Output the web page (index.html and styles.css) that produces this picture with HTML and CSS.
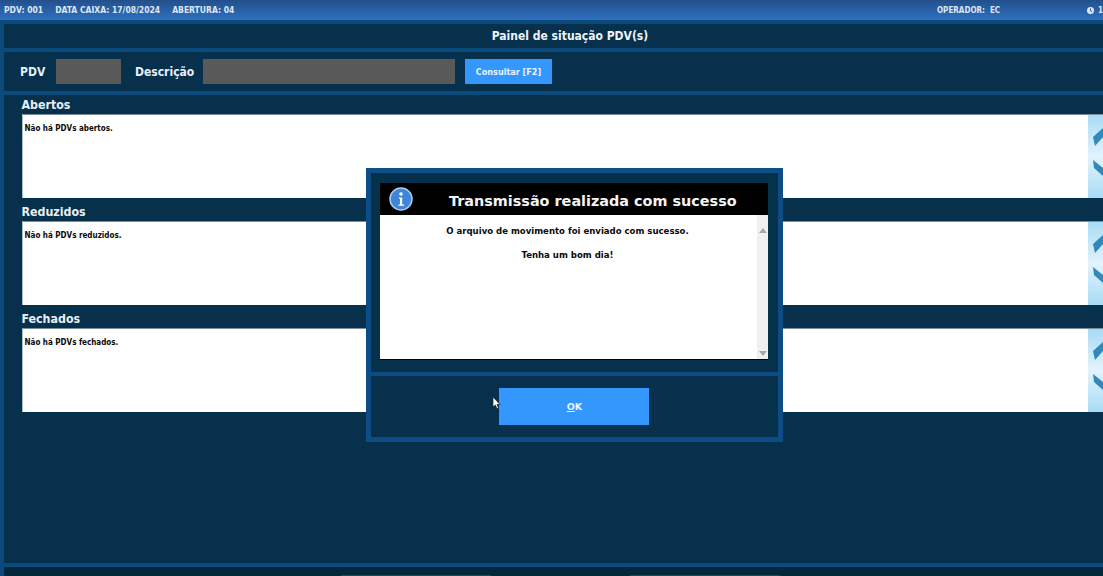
FILE: index.html
```html
<!DOCTYPE html>
<html lang="pt">
<head>
<meta charset="utf-8">
<title>Painel de situação PDV(s)</title>
<link rel="stylesheet" href="styles.css">
</head>
<body>
<div class="topbar">
  <div class="top-left"><span>PDV: 001</span><span>DATA CAIXA: 17/08/2024</span><span>ABERTURA: 04</span></div>
  <div class="top-right">
    <span class="operator">OPERADOR: &nbsp;EC</span>
    <svg class="clock" width="7" height="7" viewBox="0 0 7 7"><circle cx="3.5" cy="3.5" r="3.5" fill="#dfe8f2"/><path d="M3.5 1.5v2.2l1.7 1" stroke="#24528f" fill="none"/></svg>
    <span class="time">1</span>
  </div>
</div>
<main class="frame">
  <header class="title">Painel de situação PDV(s)</header>
  <form class="filters">
    <label class="flabel flabel-pdv">PDV</label>
    <div class="field field-pdv"></div>
    <label class="flabel flabel-desc">Descrição</label>
    <div class="field field-desc"></div>
    <button type="button" class="consult">Consultar [F2]</button>
  </form>
  <section class="content">
    <div class="group">
      <h2>Abertos</h2>
      <div class="listbox"><p>Não há PDVs abertos.</p><div class="chev"><svg width="15" height="84" viewBox="0 0 15 84"><path d="M5 22 15 13V22L7 31zM5 45 15 53V61L6 53z" fill="#3089ba"/></svg></div></div>
    </div>
    <div class="group">
      <h2>Reduzidos</h2>
      <div class="listbox"><p>Não há PDVs reduzidos.</p><div class="chev"><svg width="15" height="84" viewBox="0 0 15 84"><path d="M5 22 15 13V22L7 31zM5 45 15 53V61L6 53z" fill="#3089ba"/></svg></div></div>
    </div>
    <div class="group">
      <h2>Fechados</h2>
      <div class="listbox"><p>Não há PDVs fechados.</p><div class="chev"><svg width="15" height="84" viewBox="0 0 15 84"><path d="M5 22 15 13V22L7 31zM5 45 15 53V61L6 53z" fill="#3089ba"/></svg></div></div>
    </div>
  </section>
  <footer class="bottom"><span class="tab"></span><span class="tab"></span></footer>
</main>
<div class="modal">
  <div class="modal-top">
    <div class="modal-head">
      <svg class="info" width="24" height="24" viewBox="0 0 24 24"><circle cx="12" cy="12" r="11" fill="#3f86d6" stroke="#a9cdf2" stroke-width="1.5"/><circle cx="12" cy="7" r="1.8" fill="#fff"/><path d="M10 10.5h3.2v7H15v1.3H9.5v-1.3h1.5v-5.7h-1z" fill="#fff"/></svg>
      <h1>Transmissão realizada com sucesso</h1>
    </div>
    <div class="modal-body">
      <div class="msg"><p>O arquivo de movimento foi enviado com sucesso.</p><p>Tenha um bom dia!</p></div>
      <div class="scroll"><i class="up"></i><i class="down"></i></div>
    </div>
  </div>
  <div class="modal-foot"><button type="button" class="ok"><u>O</u>K</button></div>
</div>
<svg class="cursor" width="9" height="14" viewBox="0 0 9 14"><path d="M1 1v10l2.3-2 1.6 3.6 1.6-.7L5 8.4h3z" fill="#fff" stroke="#222" stroke-width=".7"/></svg>
</body>
</html>
```
FILE: styles.css
```css
* { box-sizing: border-box; }
html, body { margin: 0; height: 576px; overflow: hidden; }
body { position: relative; background: #06304b; font-family: "DejaVu Sans Condensed", "DejaVu Sans", sans-serif; color: #fff; display: flex; flex-direction: column; }
.topbar { height: 20px; flex: none; display: flex; justify-content: space-between; align-items: center; background: linear-gradient(#23508c, #2f6fc0); font: bold 8px "DejaVu Sans Condensed", "DejaVu Sans", sans-serif; color: #dce8f5; padding: 0 0 0 4px; white-space: nowrap; }
.top-left { display: flex; gap: 12px; font-size: 8.5px; }
.top-right { display: flex; align-items: center; width: 166px; }
.operator { width: 151px; }
.time { margin-left: 4px; }
.clock { flex: none; }
.frame { flex: 1; display: flex; flex-direction: column; padding-top: 4px; background: #0b4a7d; padding-left: 4px; min-height: 0; }
.title { height: 24px; flex: none; background: #06304b; display: flex; align-items: center; justify-content: center; padding-left: 33px; font: bold 12px "DejaVu Sans Condensed", "DejaVu Sans", sans-serif; color: #eef4f8; }
.filters { height: 39px; flex: none; margin-top: 4px; background: #06304b; display: flex; align-items: center; padding-left: 16px; }
.flabel { font: bold 12px "DejaVu Sans Condensed", "DejaVu Sans", sans-serif; color: #e8eff5; flex: none; }
.flabel-pdv { width: 36px; }
.flabel-desc { width: 68px; margin-left: 14px; }
.field { height: 25px; background: #595959; }
.field-pdv { width: 65px; }
.field-desc { width: 252px; }
.consult { width: 87px; height: 25px; margin-left: 10px; border: 0; padding: 0; background: #3497fd; color: #e8f3ff; font: bold 9px "DejaVu Sans Condensed", "DejaVu Sans", sans-serif; }
.content { flex: 1; min-height: 0; margin-top: 4px; background: #06304b; padding: 4px 0 0 17.5px; display: flex; flex-direction: column; gap: 8px; }
.group h2 { margin: 0; height: 15px; font: bold 12.3px/13px "DejaVu Sans Condensed", "DejaVu Sans", sans-serif; color: #e8eff5; }
.listbox { height: 84px; display: flex; justify-content: space-between; background: #fff; border-top: 1px solid #7d8d99; border-left: 1px solid #aebcc6; }
.listbox p { margin: 0; padding: 8px 0 0 2px; font: bold 8px/12px "DejaVu Sans Condensed", "DejaVu Sans", sans-serif; color: #0a0a0a; }
.chev { width: 15px; flex: none; background: linear-gradient(#a8dbf6, #e2f3fd 50%, #a8dbf6); overflow: hidden; }
.chev svg { display: block; }
.bottom { height: 9px; flex: none; margin-top: 4px; background: #06263c; display: flex; align-items: flex-end; gap: 139px; padding-left: 337px; }
.tab { width: 150px; height: 1px; background: #0d4a7f; }
.modal { position: absolute; left: 366px; top: 168px; width: 417px; height: 274px; border: 5px solid #0d4c84; border-top-color: #0e4f86; background: #0d4c84; display: flex; flex-direction: column; gap: 4px; }
.modal-top { flex: none; height: 199px; background: #06304b; padding: 10px 10px 0 9px; }
.modal-head { height: 32px; background: #000; display: flex; align-items: center; position: relative; }
.info { position: absolute; left: 9px; top: 4px; }
.modal-head h1 { margin: 3px 0 0 69px; font: bold 14.4px "DejaVu Sans", sans-serif; color: #f4f4f4; white-space: nowrap; }
.modal-body { height: 145px; background: #fff; display: flex; border-bottom: 1px solid #000; }
.msg { flex: 1; text-align: center; padding: 10px 2px 0 0; color: #0a0a0a; font: bold 9.5px "DejaVu Sans Condensed", "DejaVu Sans", sans-serif; }
.msg p { margin: 0 0 13px; }
.scroll { width: 11px; flex: none; background: #f0f0f0; display: flex; flex-direction: column; justify-content: space-between; align-items: center; padding: 13px 0 3px; }
.scroll i { width: 0; height: 0; border-left: 4px solid transparent; border-right: 4px solid transparent; }
.scroll .up { border-bottom: 5px solid #a9a9a9; }
.scroll .down { border-top: 5px solid #a9a9a9; }
.modal-foot { flex: 1; background: #06304b; display: flex; justify-content: center; align-items: center; padding-right: 2px; }
.ok { width: 150px; height: 37px; border: 0; padding: 0 0 0 2px; background: #3497fd; color: #e8f3ff; font: bold 9.5px "DejaVu Sans", sans-serif; }
.cursor { position: absolute; left: 492px; top: 396px; }
```
